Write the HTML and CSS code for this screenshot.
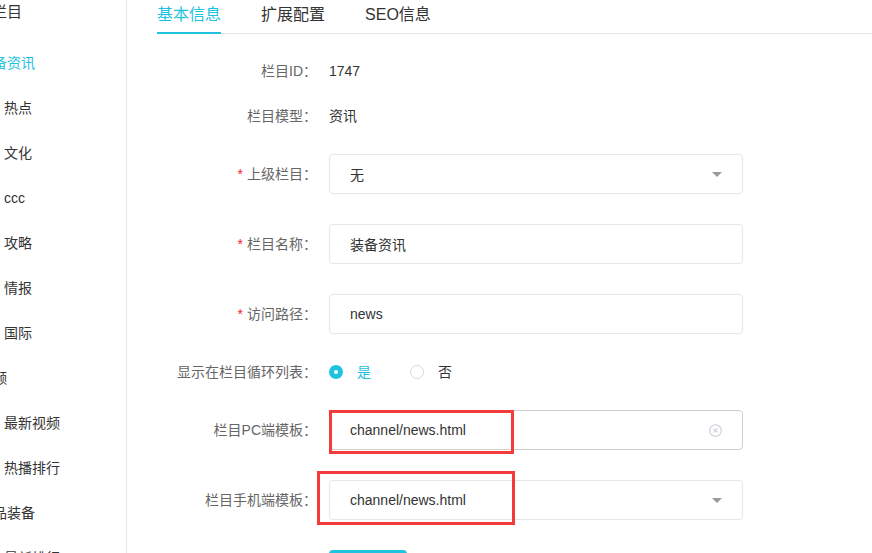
FILE: index.html
```html
<!DOCTYPE html>
<html lang="zh-CN">
<head>
<meta charset="utf-8">
<title>栏目编辑</title>
<link rel="stylesheet" href="styles.css">
</head>
<body>
<div class="page">
  <aside class="sidebar">
    <div class="side-inner">
      <div class="side-title">栏目</div>
      <ul class="side-list">
        <li class="side-item top active">装备资讯</li>
        <li class="side-item sub">热点</li>
        <li class="side-item sub">文化</li>
        <li class="side-item sub">ccc</li>
        <li class="side-item sub">攻略</li>
        <li class="side-item sub">情报</li>
        <li class="side-item sub">国际</li>
        <li class="side-item top">视频</li>
        <li class="side-item sub">最新视频</li>
        <li class="side-item sub">热播排行</li>
        <li class="side-item top">精品装备</li>
        <li class="side-item sub">最新排行</li>
      </ul>
    </div>
  </aside>
  <main class="main">
    <div class="tabs">
      <div class="tab active">基本信息</div>
      <div class="tab">扩展配置</div>
      <div class="tab">SEO信息</div>
    </div>
    <div class="form">
      <div class="row row-text">
        <div class="label">栏目ID：</div>
        <div class="value">1747</div>
      </div>
      <div class="row row-text">
        <div class="label">栏目模型：</div>
        <div class="value">资讯</div>
      </div>
      <div class="row row-field">
        <div class="label"><span class="req">*</span>上级栏目：</div>
        <div class="field">
          <span class="field-text">无</span>
          <span class="caret"></span>
        </div>
      </div>
      <div class="row row-field">
        <div class="label"><span class="req">*</span>栏目名称：</div>
        <div class="field"><span class="field-text">装备资讯</span></div>
      </div>
      <div class="row row-field">
        <div class="label"><span class="req">*</span>访问路径：</div>
        <div class="field"><span class="field-text">news</span></div>
      </div>
      <div class="row row-radio">
        <div class="label">显示在栏目循环列表：</div>
        <div class="radios">
          <span class="radio checked"><span class="radio-dot"></span><span class="radio-text">是</span></span>
          <span class="radio"><span class="radio-dot"></span><span class="radio-text">否</span></span>
        </div>
      </div>
      <div class="row row-field">
        <div class="label">栏目PC端模板：</div>
        <div class="field field-hover">
          <span class="field-text">channel/news.html</span>
          <span class="clear">
            <svg width="13" height="13" viewBox="0 0 13 13"><circle cx="6.5" cy="6.5" r="5.8" fill="none" stroke="#c8ccd6" stroke-width="1.1"/><path d="M4.6 4.6 L8.4 8.4 M8.4 4.6 L4.6 8.4" stroke="#c8ccd6" stroke-width="1.1"/></svg>
          </span>
          <span class="mark mark-pc"></span>
        </div>
      </div>
      <div class="row row-field">
        <div class="label">栏目手机端模板：</div>
        <div class="field">
          <span class="field-text">channel/news.html</span>
          <span class="caret"></span>
          <span class="mark mark-mobile"></span>
        </div>
      </div>
      <div class="row row-field">
        <div class="label"></div>
        <div class="btn">保存</div>
      </div>
    </div>
  </main>
</div>
</body>
</html>
```
FILE: styles.css
```css
html, body {
  margin: 0;
  padding: 0;
  background: #fff;
  overflow: hidden;
}
body {
  font-family: "Liberation Sans", "Noto Sans CJK SC", sans-serif;
  font-size: 14px;
  color: #333;
}
.page {
  display: flex;
  width: 872px;
  height: 553px;
  overflow: hidden;
}
.sidebar {
  width: 126px;
  flex: none;
  border-right: 1px solid #e6e6e6;
  overflow: hidden;
}
.side-inner {
  margin-left: -21px;
}
.side-title {
  height: 24px;
  line-height: 24px;
  font-size: 15px;
  padding-left: 13px;
  color: #333;
  white-space: nowrap;
}
.side-list {
  list-style: none;
  margin: 17px 0 0;
  padding: 0;
}
.side-item {
  height: 45px;
  line-height: 45px;
  font-size: 14px;
  color: #333;
  white-space: nowrap;
}
.side-item.sub {
  padding-left: 25px;
}
.side-item.active {
  color: #1fc3df;
}
.main {
  flex: 1;
  padding-left: 30px;
  min-width: 0;
}
.tabs {
  display: flex;
  height: 33px;
  border-bottom: 1px solid #e6e6e6;
}
.tab {
  font-size: 16px;
  line-height: 30px;
  height: 30px;
  padding-bottom: 2px;
  margin-right: 40px;
  color: #333;
  white-space: nowrap;
}
.tab.active {
  color: #1fc3df;
  border-bottom: 2px solid #1fc3df;
}
.form {
  display: flex;
  flex-direction: column;
  gap: 30px;
  padding-top: 30px;
}
.row {
  display: flex;
  align-items: center;
}
.row-text {
  height: 15px;
}
.row-radio {
  height: 16px;
}
.row-field {
  height: 40px;
}
.label {
  width: 160px;
  flex: none;
  text-align: right;
  color: #666;
  white-space: nowrap;
  margin-right: 12px;
  line-height: 15px;
}
.req {
  color: #f5222d;
  margin-right: 4px;
}
.value {
  color: #333;
  line-height: 15px;
}
.field {
  position: relative;
  box-sizing: border-box;
  width: 414px;
  height: 40px;
  border: 1px solid #e6e6e6;
  border-radius: 4px;
  padding-left: 20px;
  padding-right: 20px;
  display: flex;
  align-items: center;
}
.field-hover {
  border-color: #cfcfcf;
}
.field-text {
  color: #333;
  flex: 1;
}
.caret {
  width: 0;
  height: 0;
  border-left: 5px solid transparent;
  border-right: 5px solid transparent;
  border-top: 5px solid #999;
  margin-top: 1px;
}
.clear {
  width: 13px;
  height: 13px;
  display: flex;
}
.mark {
  position: absolute;
  border: 3px solid #f43b3b;
  box-sizing: border-box;
  pointer-events: none;
}
.mark-pc {
  left: -1px;
  top: -1px;
  width: 185px;
  height: 44px;
}
.mark-mobile {
  left: -13px;
  top: -10px;
  width: 198px;
  height: 54px;
}
.radios {
  display: flex;
  align-items: center;
}
.radio {
  display: flex;
  align-items: center;
  margin-right: 39px;
}
.radio-dot {
  box-sizing: border-box;
  width: 14px;
  height: 14px;
  border-radius: 50%;
  border: 1px solid #d9d9d9;
  margin-right: 14px;
  background: #fff;
}
.radio.checked .radio-dot {
  border: 5px solid #1fc3df;
  background: #fff;
}
.radio-text {
  line-height: 16px;
  color: #333;
}
.radio.checked .radio-text {
  color: #1fc3df;
}
.row-field .btn {
  align-self: flex-start;
}
.btn {
  width: 78px;
  height: 36px;
  line-height: 36px;
  text-align: center;
  color: #fff;
  background: #1fc3df;
  border-radius: 4px;
}
```
